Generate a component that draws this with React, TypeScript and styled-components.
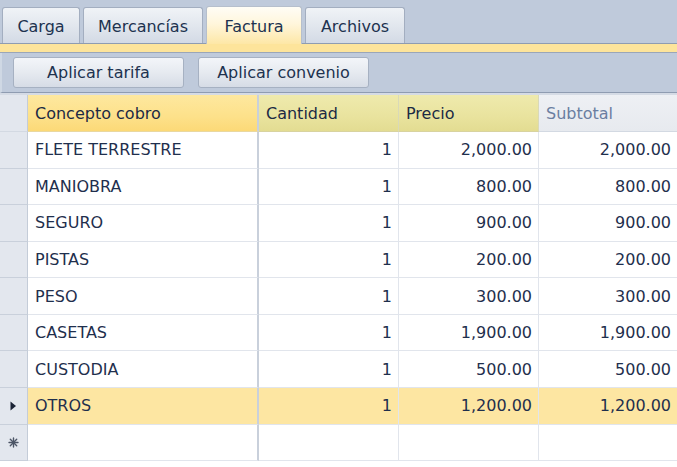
import React from "react";
import styled, { createGlobalStyle, css } from "styled-components";

const GlobalStyle = createGlobalStyle`
  html, body { margin: 0; padding: 0; background: #ffffff; }
  body { font-family: "DejaVu Sans", "Liberation Sans", sans-serif; }
  * { box-sizing: border-box; }
`;

const Frame = styled.div`
  width: 677px;
  height: 467px;
  overflow: hidden;
  background: #ffffff;
  display: flex;
  flex-direction: column;
  font-family: "DejaVu Sans", "Liberation Sans", sans-serif;
  color: #1f2f4d;
`;

const TabStrip = styled.div`
  height: 44px;
  display: flex;
  align-items: flex-end;
  gap: 3px;
  padding: 0 0 0 2px;
  background: linear-gradient(to top, #8f9cb1 0, #8f9cb1 1px, #bfcadb 1px, #bfcadb 100%);
`;

const Tab = styled.div<{ $active?: boolean; $w: number }>`
  width: ${(p) => p.$w}px;
  height: ${(p) => (p.$active ? 38 : 36)}px;
  margin-bottom: ${(p) => (p.$active ? 0 : 1)}px;
  display: flex;
  align-items: center;
  justify-content: center;
  padding-top: 1px;
  font-size: 16px;
  color: #20324f;
  border: 1px solid #a3aec0;
  border-bottom: none;
  border-radius: 3px 3px 0 0;
  ${(p) =>
    p.$active
      ? css`
          background: linear-gradient(to bottom, #fffdf6 0%, #fff6dc 45%, #fde7a6 100%);
          border-color: #b6bfcc;
        `
      : css`
          background: linear-gradient(to bottom, #f0f3f7 0%, #e2e7ee 50%, #d3dae5 100%);
        `}
`;

const Band = styled.div`
  height: 9px;
  background: #fde49b;
  border-bottom: 1px solid #9aa6b8;
`;

const Toolbar = styled.div`
  height: 40px;
  display: flex;
  align-items: center;
  gap: 14px;
  padding: 0 0 0 11px;
  background: #bfcadb;
  border-bottom: 1px solid #8f9cb1;
  border-left: 2px solid #cfd8e4;
`;

const Button = styled.div`
  width: 171px;
  height: 31px;
  display: flex;
  align-items: center;
  justify-content: center;
  font-size: 16px;
  color: #20324f;
  border: 1px solid #a6b1c2;
  border-radius: 3px;
  background: linear-gradient(to bottom, #f3f5f9 0%, #e6eaf0 50%, #d6dce6 100%);
`;

const Gap = styled.div`
  height: 2px;
  background: #d5dbe5;
`;

const Grid = styled.div`
  display: flex;
  flex-direction: column;
  background: #ffffff;
`;

const COLS = "28px 231px 140px 140px 1fr";

const HeaderRow = styled.div`
  display: grid;
  grid-template-columns: ${COLS};
  height: 37px;
`;

type Tone = "blank" | "key" | "olive" | "plain";

const HeaderCell = styled.div<{ $tone: Tone }>`
  display: flex;
  align-items: center;
  padding: 0 7px;
  font-size: 16px;
  border-bottom: 1px solid #d3d9e2;
  border-right: 1px solid #d0d6df;
  ${(p) =>
    p.$tone === "blank" &&
    css`
      background: #e3e7ee;
      border-right-color: #c4ccd8;
    `}
  ${(p) =>
    p.$tone === "key" &&
    css`
      background: linear-gradient(to bottom, #fee89f 0%, #fde18a 60%, #fcd977 100%);
      border-right: 2px solid #c9d0db;
      border-bottom-color: #e9d8a0;
      color: #1c2a44;
    `}
  ${(p) =>
    p.$tone === "olive" &&
    css`
      background: linear-gradient(to bottom, #efeaad 0%, #e9e39e 60%, #e3dc92 100%);
      border-right-color: #d9d9b8;
      border-bottom-color: #d8d3a0;
      color: #1c2a44;
    `}
  ${(p) =>
    p.$tone === "plain" &&
    css`
      background: linear-gradient(to bottom, #eef0f4 0%, #e7eaef 100%);
      color: #6a7ea1;
      border-right: none;
    `}
`;

const Row = styled.div<{ $selected?: boolean }>`
  display: grid;
  grid-template-columns: ${COLS};
  height: 36.57px;
  background: ${(p) => (p.$selected ? "#fde6a2" : "#ffffff")};
`;

const Indicator = styled.div`
  display: flex;
  align-items: center;
  justify-content: center;
  background: #e3e7ee;
  border-right: 1px solid #c4ccd8;
  border-bottom: 1px solid #c9d0db;
`;

const Cell = styled.div<{ $num?: boolean; $key?: boolean; $last?: boolean }>`
  display: flex;
  align-items: center;
  justify-content: ${(p) => (p.$num ? "flex-end" : "flex-start")};
  padding: 0 6px 0 7px;
  font-size: 16px;
  color: #1f2f4d;
  border-bottom: 1px solid #e1e5ec;
  border-right: ${(p) => (p.$key ? "2px solid #c9d0db" : p.$last ? "none" : "1px solid #e1e5ec")};
`;

const Arrow = () => (
  <svg width="7" height="10" viewBox="0 0 7 10">
    <path d="M0.5 0.5 L6 5 L0.5 9.5 Z" fill="#1b2336" />
  </svg>
);

const NewMark = () => (
  <svg width="11" height="11" viewBox="0 0 11 11" stroke="#4c5566" strokeWidth="1.4" strokeLinecap="round">
    <line x1="5.5" y1="1" x2="5.5" y2="10" />
    <line x1="1" y1="5.5" x2="10" y2="5.5" />
    <line x1="2.3" y1="2.3" x2="8.7" y2="8.7" />
    <line x1="8.7" y1="2.3" x2="2.3" y2="8.7" />
  </svg>
);

const rows = [
  ["FLETE TERRESTRE", "1", "2,000.00", "2,000.00"],
  ["MANIOBRA", "1", "800.00", "800.00"],
  ["SEGURO", "1", "900.00", "900.00"],
  ["PISTAS", "1", "200.00", "200.00"],
  ["PESO", "1", "300.00", "300.00"],
  ["CASETAS", "1", "1,900.00", "1,900.00"],
  ["CUSTODIA", "1", "500.00", "500.00"],
  ["OTROS", "1", "1,200.00", "1,200.00"],
];

export default function App() {
  return (
    <>
      <GlobalStyle />
      <Frame>
        <TabStrip>
          <Tab $w={78}>Carga</Tab>
          <Tab $w={120}>Mercancías</Tab>
          <Tab $w={96} $active>Factura</Tab>
          <Tab $w={100}>Archivos</Tab>
        </TabStrip>
        <Band />
        <Toolbar>
          <Button>Aplicar tarifa</Button>
          <Button>Aplicar convenio</Button>
        </Toolbar>
        <Gap />
        <Grid>
          <HeaderRow>
            <HeaderCell $tone="blank" />
            <HeaderCell $tone="key">Concepto cobro</HeaderCell>
            <HeaderCell $tone="olive">Cantidad</HeaderCell>
            <HeaderCell $tone="olive">Precio</HeaderCell>
            <HeaderCell $tone="plain">Subtotal</HeaderCell>
          </HeaderRow>
          {rows.map((r, i) => {
            const selected = i === rows.length - 1;
            return (
              <Row key={r[0]} $selected={selected}>
                <Indicator>{selected && <Arrow />}</Indicator>
                <Cell $key>{r[0]}</Cell>
                <Cell $num>{r[1]}</Cell>
                <Cell $num>{r[2]}</Cell>
                <Cell $num $last>{r[3]}</Cell>
              </Row>
            );
          })}
          <Row>
            <Indicator>
              <NewMark />
            </Indicator>
            <Cell $key />
            <Cell />
            <Cell />
            <Cell $last />
          </Row>
        </Grid>
      </Frame>
    </>
  );
}
